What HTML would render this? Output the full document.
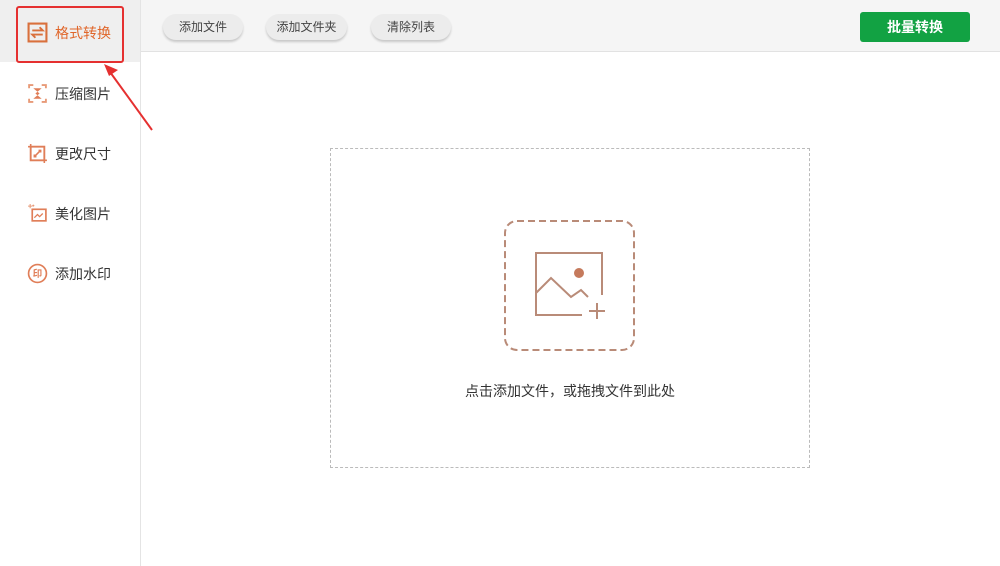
<!DOCTYPE html>
<html><head><meta charset="utf-8"><style>
body{margin:0;width:1000px;height:566px;background:#fff;font-family:"Liberation Sans","Noto Sans CJK SC",sans-serif;position:relative;overflow:hidden}
.side{position:absolute;left:0;top:0;width:140px;height:566px;border-right:1px solid #e4e4e4;background:#fff}
.sel{position:absolute;left:0;top:0;width:140px;height:62px;background:#efefef}
.item{position:absolute;left:27px;font-size:14px;color:#333;display:flex;align-items:center;white-space:nowrap}
.item svg{margin-right:7px;flex-shrink:0}
.top{position:absolute;left:141px;top:0;right:0;height:51px;background:#f5f5f5;border-bottom:1px solid #e2e2e2}
.btn{position:absolute;top:14px;height:26px;border-radius:13px;background:#ececec;box-shadow:0 2px 2px #c8c8c8;font-size:12px;color:#444;text-align:center;line-height:26px}
.go{position:absolute;left:860px;top:12px;width:110px;height:30px;background:#12a243;color:#fff;border-radius:3px;font-size:14px;text-align:center;line-height:30px;font-weight:bold}
.drop{position:absolute;left:330px;top:148px;width:478px;height:318px;border:1px dashed #bbb}
</style></head><body>
<div class="side">
<div class="sel"></div>
<div class="item" style="top:22px;color:#e0662a"><svg width="21" height="21" viewBox="0 0 20 20"><rect x="1.5" y="1.5" width="17" height="17" fill="none" stroke="#d9703c" stroke-width="2"/><path d="M5 8h10l-3-3M15 12H5l3 3" fill="none" stroke="#d9703c" stroke-width="1.8"/></svg>格式转换</div>
<div class="item" style="top:83px"><svg width="21" height="21" viewBox="0 0 20 20"><path d="M2 5V2h4M14 2h4v3M18 15v3h-4M6 18H2v-3" fill="none" stroke="#e89a78" stroke-width="1.8"/><path d="M6 5h8l-6 5 6 5H6l6-5z" fill="#e07e58"/></svg>压缩图片</div>
<div class="item" style="top:143px"><svg width="21" height="21" viewBox="0 0 20 20"><rect x="3.5" y="3.5" width="13" height="13" fill="none" stroke="#e07e58" stroke-width="1.8"/><path d="M1 3.5h2.5M3.5 1v2.5M19 16.5h-2.5M16.5 19v-2.5M7 13l6-6M9 13H7v-2M11 7h2v2" fill="none" stroke="#e07e58" stroke-width="1.5"/></svg>更改尺寸</div>
<div class="item" style="top:203px"><svg width="21" height="21" viewBox="0 0 20 20"><rect x="5" y="6" width="13" height="11" fill="none" stroke="#e07e58" stroke-width="1.6"/><path d="M7 14l3-3 2 2 3-3" fill="none" stroke="#e07e58" stroke-width="1.2"/><path d="M1 3h4M3 1v4M6 1.5v2M5 2.5h2" stroke="#e89a78" stroke-width="1"/></svg>美化图片</div>
<div class="item" style="top:263px"><svg width="21" height="21" viewBox="0 0 20 20"><circle cx="10" cy="10" r="8.5" fill="none" stroke="#e07e58" stroke-width="1.6"/><text x="10" y="13.5" font-size="9" font-weight="bold" text-anchor="middle" fill="#e07e58" font-family="Noto Sans CJK SC">印</text></svg>添加水印</div>
</div>
<div style="position:absolute;left:16px;top:6px;width:104px;height:53px;border:2px solid #e53030;border-radius:3px"></div>
<svg style="position:absolute;left:0;top:0" width="200" height="140"><line x1="152" y1="130" x2="110" y2="72" stroke="#e53030" stroke-width="2"/><path d="M104 64l14 6-9 6z" fill="#e53030"/></svg>
<div class="top"></div>
<div class="btn" style="left:163px;width:80px">添加文件</div>
<div class="btn" style="left:266px;width:81px">添加文件夹</div>
<div class="btn" style="left:371px;width:80px">清除列表</div>
<div class="go">批量转换</div>
<div class="drop"></div>
<svg style="position:absolute;left:504px;top:220px" width="132" height="132"><rect x="1" y="1" width="129" height="129" rx="12" fill="none" stroke="#b98b78" stroke-width="2" stroke-dasharray="7 4"/><path d="M78 95H32V33h66v42" fill="none" stroke="#b98b78" stroke-width="2"/><circle cx="75" cy="53" r="5" fill="#c57a5c"/><path d="M32 73l15-15 20 19 10-7 7 7" fill="none" stroke="#b98b78" stroke-width="2"/><path d="M85 91h16M93 83v16" stroke="#b98b78" stroke-width="2"/></svg>
<div style="position:absolute;left:330px;width:480px;top:381px;text-align:center;font-size:14px;color:#333">点击添加文件，或拖拽文件到此处</div>
</body></html>
